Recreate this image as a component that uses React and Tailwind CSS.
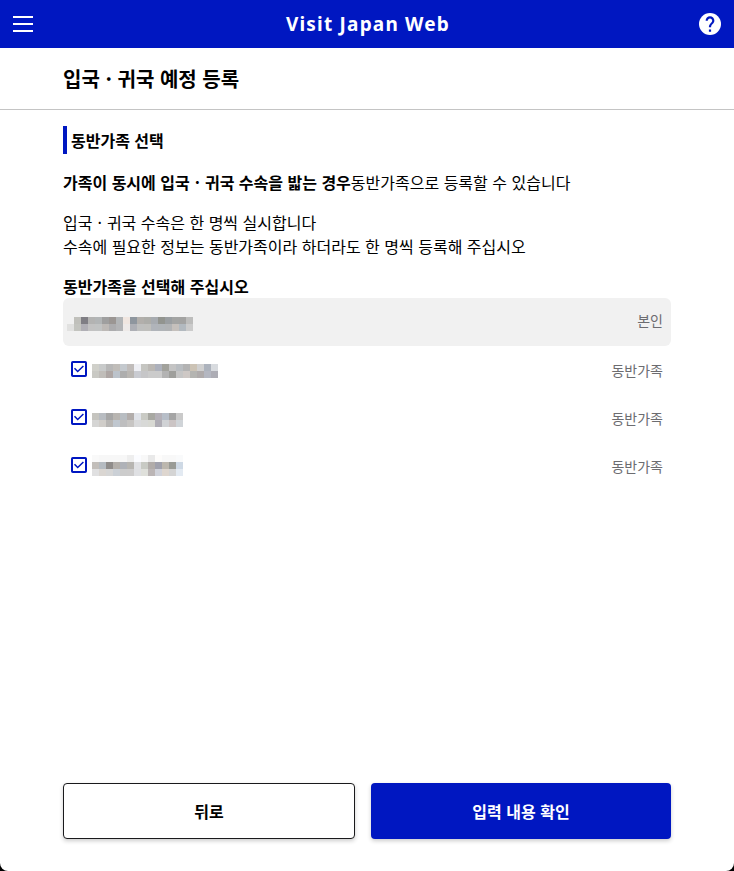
import React, { useState } from "react";

const FAMILY = [
  {
    id: 1,
    cells: [
      "d0d0ca c8caca b7b7b7 c0bdb9 c4c9ce c0bcba eeeff4 c5c5c1 bbb8b4 adb1bc a2a29c c4c4c4 b9bdc1 b3b3b3 ccc3b5 d0d0d0 adb3bd d8dbdf",
      "c9c9c4 c0bdb9 aea6a4 bcc3cb adadad b9b6b2 c9cbd1 c6c6c8 cbcbcb cbcbcb b3b3b3 9f9f9c c5c5c5 cec8c5 b4b4b1 afabab b4b7c1 adadb5",
    ],
    offset: "mt-[3px]",
  },
  {
    id: 2,
    cells: [
      "c5c4bf b8bcc1 a6a6a6 b8b5b1 b8bdc2 b2adab e0e3e9 c9cac4 a8a8a2 b4b0b7 b7bec8 a5a5a5 cacaca",
      "d5d5d4 d0cdc9 b8b6b4 c0c7cf bebebf c7c5c3 d9dadc d8d9d7 d8d9d3 afadb5 d0d2d5 cbc4c4 d0d4d8",
    ],
    offset: "mt-1",
  },
  {
    id: 3,
    cells: [
      "f9f9f9 f7f7f7 f7f7f7 f7f7f7 f7f7f7 eeeeee fbfcff f8f8f8 e9e9e9 fdfcfb f8f8f8 f8f8f8 f9fafb",
      "c2beba b5bbc1 8f8c8a b3afaa afb2b8 b7b5b1 e0e1e4 c8cac4 b1aca9 a0a1ac bcb7ae 999b96 ced9e5",
      "e0e0e1 dad6d2 d6d6d6 cbd0d6 cccccc cdcccc dfe0e3 dfe0db bbb5b5 d0d2da ded6cf d4d4d4 e3eaf2",
    ],
    offset: "-mt-[2px]",
  },
];

const SELF_CELLS = [
  "f1f1f1 c0c0bb 7f7e84 b3b3b2 b2b5b6 9f9f9f 9b9693 b2b5b7 f0e6e0 8e969e b2afab adada9 a7abb0 92948f 9a9ea1 a3a4a3 a3a3a2 bdbdbc",
  "e1e1e0 c3c4bf b0afb5 c2c2c2 c1c3c3 bdb9b6 acacae b3b4b6 eeeae8 adafb5 bebfbe bfbfbc b0b4ba b0b4b8 b1b3b5 c5c0bc b2b9bf cbcbcb",
];

// Masked traveller name
const MaskedName = ({ cells }) => (
  <div className="flex flex-col">
    {cells.map((row, i) => (
      <div key={i} className="flex">
        {row.split(" ").map((color, j) => (
          <span
            key={j}
            className="block h-[7px] w-[7px]"
            style={{ backgroundColor: `#${color}` }}
          />
        ))}
      </div>
    ))}
  </div>
);

const CheckBox = ({ checked, onChange }) => (
  <button
    type="button"
    role="checkbox"
    aria-checked={checked}
    onClick={onChange}
    className="block h-4 w-4 shrink-0"
  >
    <svg viewBox="0 0 16 16" className="block h-4 w-4" fill="none">
      <rect x="1" y="1" width="14" height="14" rx="0.8" fill="#fff" stroke="#0017c1" strokeWidth="2" />
      {checked && (
        <path d="M3.5 7.3 6.7 10.5 12.4 5" stroke="#0017c1" strokeWidth="1.5" />
      )}
    </svg>
  </button>
);

const App = () => {
  const [selected, setSelected] = useState([1, 2, 3]);

  const toggle = (id) => {
    setSelected((prev) =>
      prev.includes(id) ? prev.filter((item) => item !== id) : [...prev, id]
    );
  };

  return (
    <div className="bg-black">
      <div
        lang="ko"
        className="flex h-screen min-h-[871px] flex-col overflow-hidden rounded-b-[8px] bg-white font-['Noto_Sans_CJK_KR','Noto_Sans',sans-serif] text-base leading-6 text-black"
      >
        <header className="flex h-12 shrink-0 items-center justify-between bg-[#0017c1] px-[13px] text-white">
          <button type="button" aria-label="menu" className="flex w-5 flex-col gap-[5px]">
            <span className="h-[2px] bg-white" />
            <span className="h-[2px] bg-white" />
            <span className="h-[2px] bg-white" />
          </button>
          <h1 className="pb-px pl-1 font-['Noto_Sans',sans-serif] text-[19px] leading-7 font-bold tracking-[1.2px]">
            Visit Japan Web
          </h1>
          <button type="button" aria-label="help">
            <svg viewBox="2 2 20 20" className="block h-[22px] w-[22px]">
              <circle cx="12" cy="12" r="10" fill="#fff" />
              <path
                d="M13 19h-2v-2h2zM15.07 11.25l-.9.92C13.45 12.9 13 13.5 13 15h-2v-.5c0-1.1.45-2.1 1.17-2.83l1.24-1.26c.37-.36.59-.86.59-1.41 0-1.1-.9-2-2-2s-2 .9-2 2H8c0-2.21 1.79-4 4-4s4 1.79 4 4c0 .88-.36 1.68-.93 2.25z"
                fill="#0017c1"
              />
            </svg>
          </button>
        </header>

        <div className="flex h-[62px] shrink-0 items-center border-b border-[#c4c4c4] px-[63px]">
          <h2 className="text-xl font-bold">
            입국 · 귀국 예정 등록
          </h2>
        </div>

        <main className="flex flex-1 flex-col px-[63px] pt-4 pb-8">
          <h3 className="flex h-7 items-center border-l-4 border-[#0017c1] pl-1 font-bold">
            동반가족 선택
          </h3>
          <p className="mt-4">
            <b className="font-bold">
              가족이 동시에 입국<span className="px-[0.5px]"> · </span>귀국 수속을 밟는 경우
            </b>
            동반가족으로 등록할 수 있습니다
          </p>
          <p className="mt-4">
            입국<span className="px-[0.5px]"> · </span>귀국 수속은 한 명씩 실시합니다
            <br />
            수속에 필요한 정보는 동반가족이라 하더라도 한 명씩 등록해 주십시오
          </p>
          <p className="mt-4 font-bold">동반가족을 선택해 주십시오</p>

          <div className="flex h-12 items-start justify-between rounded-md bg-[#f1f1f1] pr-2 pl-1">
            <div className="mt-[19px]">
              <MaskedName cells={SELF_CELLS} />
            </div>
            <span className="mt-[10px] text-sm leading-6 text-[#6c6c70]">본인</span>
          </div>

          {FAMILY.map((person) => (
            <div key={person.id} className="flex h-12 items-start px-2 pt-[15px]">
              <CheckBox
                checked={selected.includes(person.id)}
                onChange={() => toggle(person.id)}
              />
              <div className={`ml-[5px] flex-1 ${person.offset}`}>
                <MaskedName cells={person.cells} />
              </div>
              <span className="-mt-[3px] text-sm leading-6 text-[#6c6c70]">동반가족</span>
            </div>
          ))}

          <div className="mt-auto flex gap-4 font-bold">
            <button
              type="button"
              className="h-14 w-[292px] rounded-[4px] border border-[#1a1a1c] bg-white shadow-[0_2px_4px_rgba(0,0,0,0.2)]"
            >
              뒤로
            </button>
            <button
              type="button"
              className="h-14 flex-1 rounded-[4px] bg-[#0017c1] text-white shadow-[0_2px_4px_rgba(0,0,0,0.2)]"
            >
              입력 내용 확인
            </button>
          </div>
        </main>
      </div>
    </div>
  );
};

export default App;
